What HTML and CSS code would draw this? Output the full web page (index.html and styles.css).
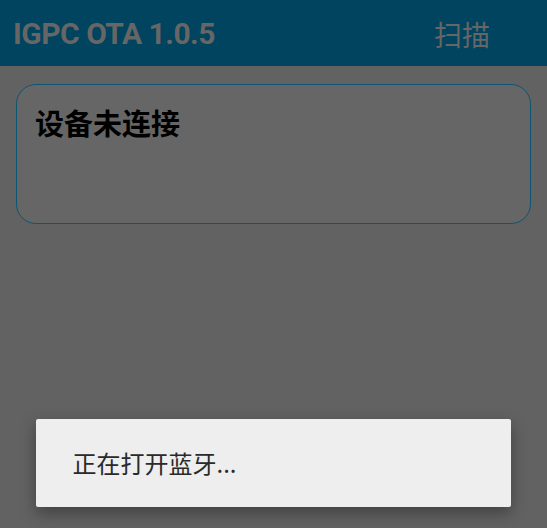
FILE: index.html
```html
<!DOCTYPE html>
<html lang="zh">
  <head>
    <meta charset="UTF-8" />
    <meta name="viewport" content="width=device-width, initial-scale=1.0" />
    <title>IGPC OTA</title>
    <link rel="stylesheet" href="styles.css">
  </head>
  <body>
    <div class="app-bar">
      <div class="app-title">IGPC OTA 1.0.5</div>
      <div class="app-action">扫描</div>
    </div>

    <div class="content">
      <div class="status-card">
        <div class="status-text">设备未连接</div>
      </div>
    </div>

    <!-- progress dialog over dimmed screen -->
    <div class="dialog-layer">
      <div class="dialog">
        <span class="dialog-text">正在打开蓝牙...</span>
      </div>
    </div>
  </body>
</html>
```

FILE: styles.css
```css
body {
  margin: 0;
  padding: 0;
  background-color: #626262;
  height: 100vh;
  overflow: hidden;
  font-family: Roboto, "Noto Sans CJK SC", sans-serif;
  position: relative;
}

.app-bar {
  height: 66px;
  background-color: #00445f;
  display: flex;
  align-items: center;
  justify-content: space-between;
  padding: 0 57px 0 13px;
}

.app-title {
  font-size: 30px;
  font-weight: bold;
  color: #666;
  letter-spacing: -0.5px;
}

.app-action {
  font-family: "Noto Sans CJK SC", sans-serif;
  font-size: 28px;
  color: #666;
  line-height: 1;
  margin-top: 2px;
}

.content {
  padding: 18px 16px;
}

.status-card {
  height: 140px;
  box-sizing: border-box;
  border: 1px solid #0d5572;
  border-radius: 20px;
  background-color: #666;
  padding: 23px 18px;
}

.status-text {
  font-family: "Noto Sans CJK SC", sans-serif;
  font-size: 29px;
  font-weight: bold;
  color: #000;
  line-height: 1;
}

.dialog-layer {
  position: absolute;
  left: 0;
  right: 0;
  top: 419px;
  display: flex;
  justify-content: center;
}

.dialog {
  width: 475px;
  height: 88px;
  box-sizing: border-box;
  margin-left: -1px;
  background-color: #eeeeee;
  border-radius: 2px;
  box-shadow: 0 6px 16px rgba(0, 0, 0, 0.35);
  display: flex;
  align-items: center;
  padding: 0 0 2px 37px;
}

.dialog-text {
  font-family: "Noto Sans CJK SC", sans-serif;
  font-size: 24px;
  color: #2a2a2a;
}
```
